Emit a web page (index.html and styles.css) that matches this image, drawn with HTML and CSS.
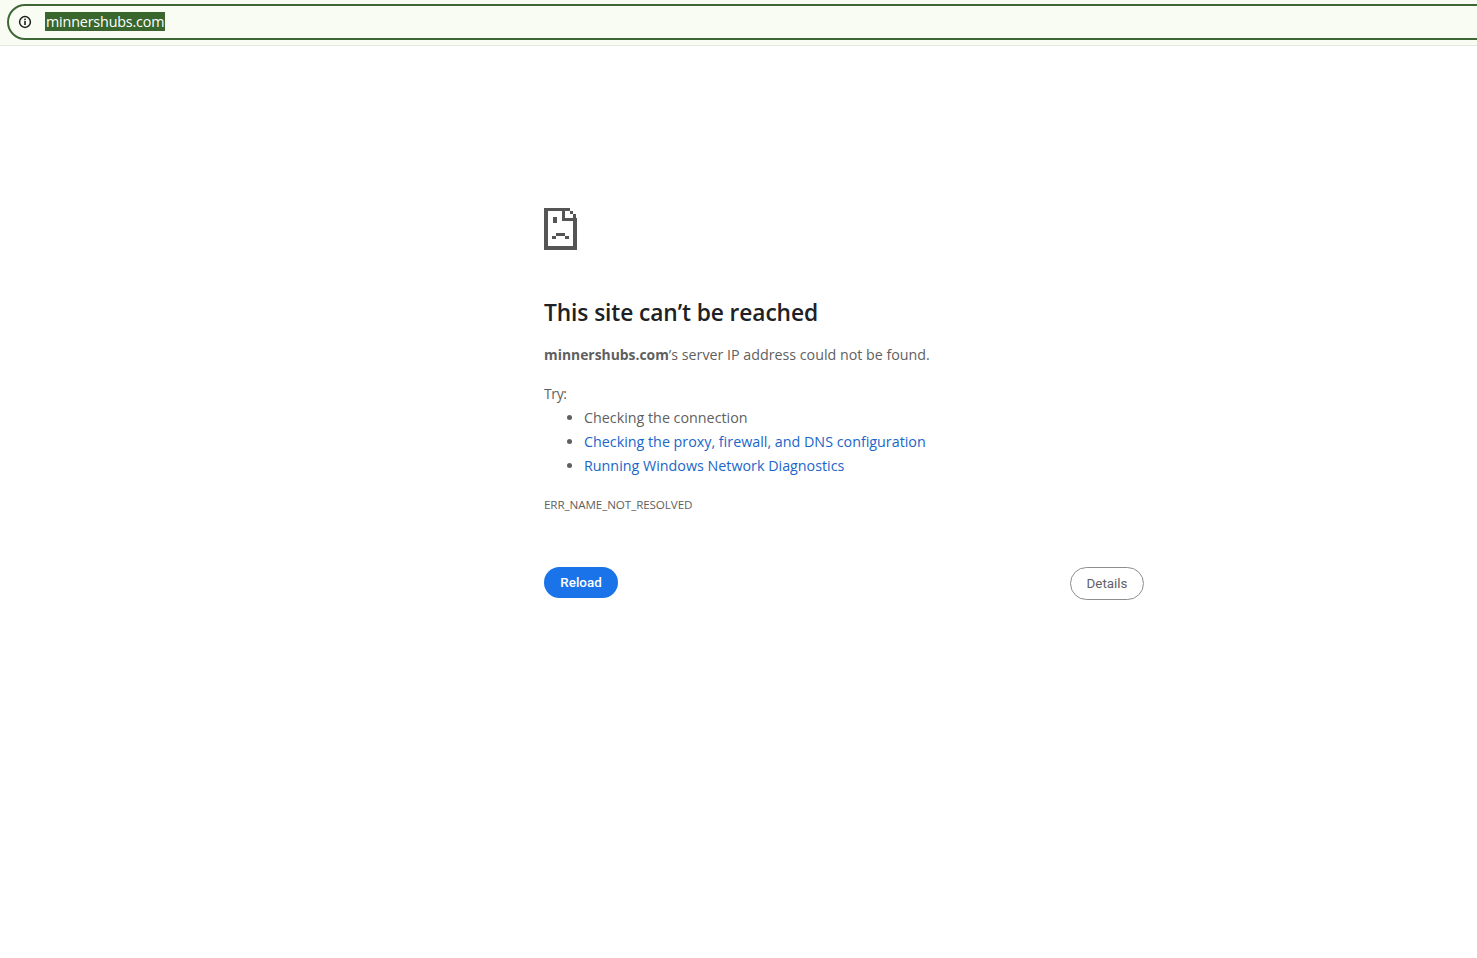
FILE: index.html
```html
<!DOCTYPE html>
<html lang="en">
<head>
<meta charset="utf-8">
<title>minnershubs.com</title>
<link rel="stylesheet" href="styles.css">
</head>
<body>
<header class="toolbar">
  <div class="omnibox">
    <svg class="info-icon" width="14" height="14" viewBox="0 0 14 14" aria-hidden="true">
      <circle cx="7" cy="7" r="5.4" fill="none" stroke="#1f1f1f" stroke-width="1.5"/>
      <rect x="6.2" y="6" width="1.6" height="4" fill="#1f1f1f"/>
      <rect x="6.2" y="3.7" width="1.6" height="1.5" fill="#1f1f1f"/>
    </svg>
    <span class="url">minnershubs.com</span>
  </div>
</header>
<main class="error-page">
  <svg class="sad-page" width="33" height="42" viewBox="0 0 33 42" shape-rendering="crispEdges" aria-hidden="true">
    <path fill="#555" d="M0 0H26V3H4V38H29V13H33V42H0Z"/>
    <path fill="#555" d="M18 0H21V10H33V13H18Z"/>
    <path fill="#555" d="M26 3H29V6H26ZM29 6H32V10H29Z"/>
    <path fill="#555" d="M9 9H13V15H9Z"/>
    <path fill="#555" d="M12 25H21V28H12ZM8 28H12V31H8ZM21 28H25V31H21Z"/>
  </svg>
  <h1 class="title">This site can’t be reached</h1>
  <p class="summary"><strong>minnershubs.com</strong>’s server IP address could not be found.</p>
  <p class="try">Try:</p>
  <ul class="suggestions">
    <li>Checking the connection</li>
    <li><a href="#">Checking the proxy, firewall, and DNS configuration</a></li>
    <li><a href="#">Running Windows Network Diagnostics</a></li>
  </ul>
  <p class="code">ERR_NAME_NOT_RESOLVED</p>
  <div class="actions">
    <button class="btn-reload">Reload</button>
    <button class="btn-details">Details</button>
  </div>
</main>
</body>
</html>
```
FILE: styles.css
```css
html, body {
  margin: 0;
  padding: 0;
  background: #fff;
}
body {
  height: 958px;
  overflow: hidden;
  font-family: "Open Sans", "Noto Sans", sans-serif;
  color: #5f5f5f;
}
.toolbar {
  height: 46px;
  box-sizing: border-box;
  padding: 4px 0 5px 7px;
  background: #f8fcf3;
  border-bottom: 1px solid #e6e9e0;
  overflow: hidden;
}
.omnibox {
  display: flex;
  align-items: center;
  width: 1500px;
  height: 36px;
  box-sizing: border-box;
  border: 2px solid #3f6736;
  border-radius: 18px;
  padding-left: 9px;
}
.info-icon {
  flex: none;
}
.url {
  margin: -2px 0 0 13px;
  height: 19px;
  line-height: 19px;
  padding: 0 1px;
  font-size: 14.3px;
  letter-spacing: -0.15px;
  color: #fff;
  background: #38662d;
}
.error-page {
  width: 600px;
  margin: 162px 0 0 544px;
}
.sad-page {
  display: block;
}
.title {
  margin: 48px 0 0;
  font-size: 22.75px;
  line-height: 30px;
  font-weight: 600;
  color: #202124;
  letter-spacing: -0.1px;
}
.summary {
  margin: 15px 0 0;
  font-size: 14.25px;
  line-height: 24px;
}
.summary strong {
  font-size: 13.9px;
  font-weight: 700;
}
.try {
  margin: 15px 0 0;
  font-size: 14px;
  line-height: 24px;
  letter-spacing: -0.4px;
}
.suggestions {
  margin: 0;
  padding: 0 0 0 40px;
  font-size: 14.3px;
  line-height: 24px;
}
.suggestions a {
  color: #1a66c9;
  text-decoration: none;
}
.code {
  margin: 15px 0 0;
  font-size: 11.65px;
  line-height: 24px;
  letter-spacing: -0.1px;
}
.actions {
  display: flex;
  justify-content: space-between;
  align-items: flex-start;
  margin-top: 50px;
}
.btn-reload {
  width: 74px;
  height: 31px;
  padding: 0 0 1px;
  border: 0;
  border-radius: 16px;
  background: #1a73e8;
  color: #fff;
  font-family: Roboto, sans-serif;
  font-weight: 500;
  font-size: 13.4px;
}
.btn-details {
  width: 74px;
  height: 33px;
  padding: 0 0 1px;
  border: 1px solid #8e8e8e;
  border-radius: 17px;
  background: #fff;
  color: #5f6368;
  font-family: Roboto, sans-serif;
  font-size: 13.4px;
}
```
